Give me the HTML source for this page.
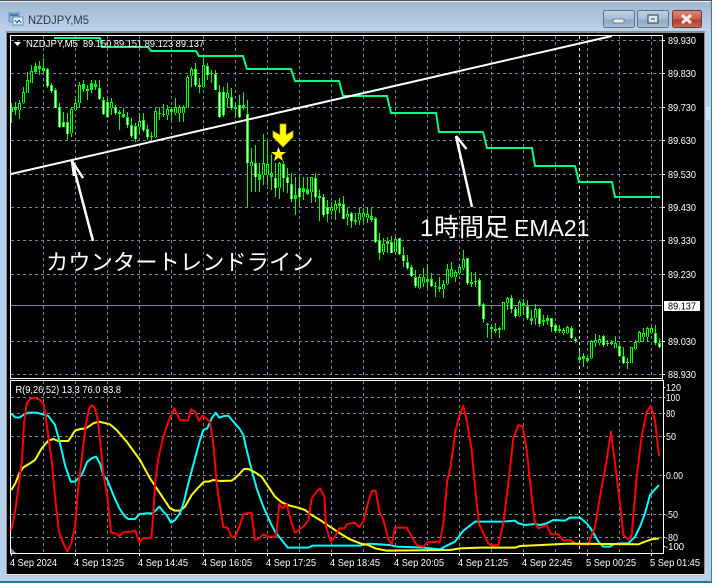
<!DOCTYPE html>
<html><head><meta charset="utf-8"><title>NZDJPY,M5</title>
<style>
html,body{margin:0;padding:0;background:#fff}
body{width:715px;height:584px;overflow:hidden;position:relative;font-family:"Liberation Sans","Noto Sans CJK JP",sans-serif}
svg{position:absolute;left:0;top:0}
.ax{font:10.5px "Liberation Sans",sans-serif;fill:#fff}
.big{font-family:"Liberation Sans","Noto Sans CJK JP",sans-serif;fill:#fff}
</style></head><body>
<svg width="715" height="584" viewBox="0 0 715 584">
<defs>
<linearGradient id="tb" x1="0" y1="0" x2="0" y2="1"><stop offset="0" stop-color="#9fb7d2"/><stop offset="1" stop-color="#bcd3ec"/></linearGradient>
<linearGradient id="bt" x1="0" y1="0" x2="0" y2="1"><stop offset="0" stop-color="#bfd0e2"/><stop offset=".5" stop-color="#a9bed6"/><stop offset=".55" stop-color="#8ea6c0"/><stop offset="1" stop-color="#a9c0d8"/></linearGradient>
<linearGradient id="cl" x1="0" y1="0" x2="0" y2="1"><stop offset="0" stop-color="#dc8a7c"/><stop offset=".5" stop-color="#c8604e"/><stop offset=".55" stop-color="#b23b2a"/><stop offset="1" stop-color="#c86a58"/></linearGradient>
</defs>
<!-- window frame -->
<path d="M0 3Q0 0 3 0H709Q712 0 712 3V582H0Z" fill="#b8d0ea"/>
<rect x="0" y="2" width="712" height="29" fill="url(#tb)"/>
<rect x="0" y="0" width="712" height="1" fill="#4d5660"/>
<rect x="0" y="1" width="712" height="1" fill="#eef3f8"/>
<rect x="0" y="581" width="712" height="2" fill="#17808c"/>
<rect x="711" y="1" width="1" height="581" fill="#3d7f90"/>
<rect x="6" y="31" width="699" height="545" fill="#8a8f96"/>
<rect x="7" y="33" width="697" height="541" fill="#000"/>
<rect x="6" y="574" width="699" height="1.500" fill="#e8eef5"/>
<rect x="706" y="107" width="4" height="13" fill="#d5e4f3"/>
<!-- title icon -->
<g shape-rendering="crispEdges">
<rect x="9" y="13" width="10" height="9" fill="#8fb4dc" stroke="#5f8bbb"/>
<rect x="13" y="17" width="10" height="8" fill="#e8f0fa" stroke="#5f8bbb"/>
<path d="M15 20l2 3 2-3 2 3" fill="none" stroke="#2f6bb0"/>
<rect x="10" y="14" width="8" height="2" fill="#3f78bb"/>
</g>
<text x="28" y="24" font-family="Liberation Sans" font-size="11.500" fill="#2f3a47" textLength="61" lengthAdjust="spacingAndGlyphs">NZDJPY,M5</text>
<!-- buttons -->
<rect x="603.500" y="10.500" width="31" height="17" rx="2" fill="url(#bt)" stroke="#5f7387"/>
<rect x="613" y="19" width="11" height="4" rx="1" fill="#e8edf2" stroke="#5d6a78" stroke-width=".8"/>
<rect x="637.500" y="10.500" width="31" height="17" rx="2" fill="url(#bt)" stroke="#5f7387"/>
<rect x="648" y="15" width="10" height="8" fill="#dfe7ef" stroke="#4d5b6a" stroke-width="1.300"/>
<rect x="651" y="18" width="4" height="2" fill="#7e93a8"/>
<rect x="672.500" y="10.500" width="29" height="17" rx="2" fill="url(#cl)" stroke="#6f3a35"/>
<path d="M682 15l9 8M691 15l-9 8" stroke="#f3ece8" stroke-width="3"/>
<!-- grid -->
<g stroke="#778899" stroke-width="1" stroke-dasharray="3 3" shape-rendering="crispEdges" fill="none">
<path d="M11 40.500H663M11 73.500H663M11 107.500H663M11 140.500H663M11 174.500H663M11 207.500H663M11 240.500H663M11 274.500H663M11 341.500H663M11 374.500H663"/>
<path d="M43.500 36V378M75.500 36V378M107.500 36V378M139.500 36V378M171.500 36V378M203.500 36V378M235.500 36V378M267.500 36V378M299.500 36V378M331.500 36V378M363.500 36V378M395.500 36V378M427.500 36V378M459.500 36V378M491.500 36V378M523.500 36V378M555.500 36V378M587.500 36V378M619.500 36V378M651.500 36V378"/>
<path d="M11 397.500H663M11 413.500H663M11 436.500H663M11 475.500H663M11 514.500H663M11 537.500H663"/>
<path d="M43.500 381V553M75.500 381V553M107.500 381V553M139.500 381V553M171.500 381V553M203.500 381V553M235.500 381V553M267.500 381V553M299.500 381V553M331.500 381V553M363.500 381V553M395.500 381V553M427.500 381V553M459.500 381V553M491.500 381V553M523.500 381V553M555.500 381V553M587.500 381V553M619.500 381V553M651.500 381V553"/>
</g>
<rect x="11" y="305" width="652" height="1" fill="#778899"/>
<path d="M579.500 36V553" stroke="#fff" stroke-dasharray="3 3" shape-rendering="crispEdges"/>
<!-- candles -->
<g fill="none" shape-rendering="crispEdges">
<path stroke="#00ff00" stroke-width="1" d="M11.5 103V123M15.5 102V115M19.5 100V119M23.5 87V104M27.5 72V93M31.5 65V83M35.5 63V73M39.5 61V75M43.5 58V73M47.5 68V88M51.5 83V93M55.5 88V108M59.5 103V128M63.5 112V127M67.5 113V140M71.5 107V137M75.5 98V110M79.5 82V107M83.5 80V92M87.5 85V100M91.5 80V93M95.5 80V90M99.5 80V100M103.5 97V115M107.5 97V118M111.5 98V115M115.5 105V115M119.5 110V130M123.5 108V118M127.5 112V128M131.5 118V138M135.5 123V142M139.5 113V132M143.5 113V132M147.5 125V140M151.5 132V140M155.5 108V138M159.5 107V120M163.5 104V117M167.5 105V120M171.5 107V122M175.5 98V115M179.5 105V122M183.5 105V122M187.5 75V108M191.5 67V87M195.5 63V87M199.5 78V93M203.5 57V88M207.5 63V80M211.5 70V83M215.5 70V90M219.5 85V118M223.5 87V117M227.5 83V108M231.5 88V110M235.5 103V118M239.5 95V118M243.5 92V110M247.5 100V207M251.5 148V192M255.5 145V192M259.5 163V192M263.5 134V185M267.5 140V185M271.5 154V190M275.5 163V197M279.5 162V199M283.5 161V192M287.5 168V193M291.5 173V202M295.5 177V215M299.5 177V205M303.5 177V200M307.5 177V195M311.5 177V203M315.5 173V202M319.5 190V221M323.5 194V217M327.5 200V222M331.5 202V215M335.5 200V220M339.5 198V213M343.5 196V219M347.5 208V225M351.5 212V228M355.5 213V225M359.5 208V225M363.5 208V222M367.5 208V223M371.5 207V222M375.5 217V243M379.5 233V260M383.5 238V255M387.5 237V253M391.5 236V253M395.5 237V253M399.5 238V255M403.5 247V267M407.5 255V270M411.5 265V277M415.5 270V288M419.5 275V289M423.5 268V287M427.5 264V288M431.5 273V287M435.5 282V297M439.5 277V292M443.5 280V298M447.5 264V285M451.5 262V278M455.5 270V282M459.5 265V275M463.5 250V270M467.5 258V285M471.5 272V287M475.5 272V287M479.5 278V307M483.5 303V323M487.5 323V338M491.5 325V338M495.5 323V333M499.5 327V338M503.5 302V330M507.5 297V310M511.5 295V313M515.5 307V318M519.5 300V317M523.5 299V315M527.5 300V320M531.5 310V325M535.5 304V325M539.5 308V327M543.5 315V326M547.5 315V325M551.5 318V332M555.5 323V333M559.5 325V333M563.5 328V335M567.5 326V334M571.5 326V339M575.5 337V343M579.5 351V363M583.5 353V367M587.5 357V363M591.5 340V359M595.5 334V347M599.5 335V345M603.5 335V347M607.5 340V346M611.5 340V345M615.5 336V348M619.5 343V357M623.5 347V364M627.5 358V369M631.5 347V363M635.5 340V350M639.5 331V343M643.5 328V342M647.5 327V342M651.5 327V334M655.5 325V345M659.5 338V348"/>
<path stroke="#00ff00" stroke-width="3" d="M11.5 108V112M15.5 107V110M19.5 103V110M23.5 92V103M27.5 80V93M31.5 71V83M35.5 66V72M39.5 66V69M43.5 68V71M47.5 69V86M51.5 85V91M55.5 90V108M59.5 107V127M63.5 122V127M67.5 122V134M71.5 109V133M75.5 103V110M79.5 85V103M83.5 84V89M87.5 89V91M91.5 83V90M95.5 84V87M99.5 88V99M103.5 100V114M107.5 102V117M111.5 102V108M115.5 107V113M119.5 112V114M123.5 114V117M127.5 117V125M131.5 125V136M135.5 126V139M139.5 121V127M143.5 120V130M147.5 129V137M151.5 136V137M155.5 111V137M159.5 113V114M163.5 114V115M167.5 109V115M171.5 109V112M175.5 107V113M179.5 107V113M183.5 107V113M187.5 77V108M191.5 69V76M195.5 69V85M199.5 85V87M203.5 65V87M207.5 66V75M211.5 73V74M215.5 74V90M219.5 92V117M223.5 92V115M227.5 93V98M231.5 97V108M235.5 107V109M239.5 105V117M243.5 105V108M247.5 114V163M251.5 162V166M255.5 163V177M259.5 174V180M263.5 163V175M267.5 164V175M271.5 173V177M275.5 178V188M279.5 163V188M283.5 164V178M287.5 177V183M291.5 184V199M295.5 195V199M299.5 188V197M303.5 188V192M307.5 189V194M311.5 177V192M315.5 178V197M319.5 196V198M323.5 197V215M327.5 207V214M331.5 207V211M335.5 204V210M339.5 203V206M343.5 204V219M347.5 214V217M351.5 213V221M355.5 220V222M359.5 213V220M363.5 213V217M367.5 214V218M371.5 216V220M375.5 218V242M379.5 240V253M383.5 244V252M387.5 241V244M391.5 242V253M395.5 239V252M399.5 238V254M403.5 255V261M407.5 262V268M411.5 267V276M415.5 277V286M419.5 277V288M423.5 277V283M427.5 279V282M431.5 279V286M435.5 286V287M439.5 287V289M443.5 284V289M447.5 269V284M451.5 269V277M455.5 272V277M459.5 267V273M463.5 259V268M467.5 258V283M471.5 282V284M475.5 281V282M479.5 280V305M483.5 304V319M487.5 324V325M491.5 327V329M495.5 329V331M499.5 328V330M503.5 302V330M507.5 298V303M511.5 298V309M515.5 309V316M519.5 302V316M523.5 303V305M527.5 306V318M531.5 318V321M535.5 309V318M539.5 309V324M543.5 320V322M547.5 318V321M551.5 318V327M555.5 325V331M559.5 329V331M563.5 330V333M567.5 327V333M571.5 328V338M575.5 339V341M579.5 357V360M583.5 356V359M587.5 358V361M591.5 341V358M595.5 340V343M599.5 339V343M603.5 336V345M607.5 343V344M611.5 342V344M615.5 343V348M619.5 346V356M623.5 356V363M627.5 362V363M631.5 347V363M635.5 342V349M639.5 332V342M643.5 333V337M647.5 328V337M651.5 328V333M655.5 333V343M659.5 343V347"/>
<path stroke="#fff" stroke-width="1" d="M47.5 70V86M51.5 86V91M55.5 91V108M59.5 108V127M63.5 123V127M67.5 123V134M99.5 89V99M103.5 101V114M107.5 103V117M115.5 108V113M127.5 118V125M131.5 126V136M135.5 127V139M143.5 121V130M147.5 130V137M195.5 70V85M207.5 67V75M215.5 75V90M219.5 93V117M223.5 93V115M231.5 98V108M239.5 106V117M247.5 115V163M255.5 164V177M275.5 179V188M283.5 165V178M287.5 178V183M291.5 185V199M299.5 189V197M315.5 179V197M323.5 198V215M327.5 208V214M343.5 205V219M351.5 214V221M375.5 219V242M379.5 241V253M391.5 243V253M399.5 239V254M403.5 256V261M407.5 263V268M411.5 268V276M415.5 278V286M431.5 280V286M467.5 259V283M479.5 281V305M483.5 305V319M511.5 299V309M515.5 310V316M527.5 307V318M539.5 310V324M551.5 319V327M555.5 326V331M571.5 329V338M575.5 340V341M603.5 337V345M619.5 347V356M623.5 357V363M655.5 334V343M659.5 344V347"/>
<path stroke="#000" stroke-width="1" d="M19.5 104V110M23.5 93V103M27.5 81V93M31.5 72V83M71.5 110V133M75.5 104V110M79.5 86V103M111.5 103V108M139.5 122V127M155.5 112V137M167.5 110V115M175.5 108V113M179.5 108V113M183.5 108V113M187.5 78V108M191.5 70V76M203.5 66V87M227.5 94V98M251.5 163V166M263.5 164V175M267.5 165V175M279.5 164V188M311.5 178V192M331.5 208V211M335.5 205V210M347.5 215V217M359.5 214V220M363.5 214V217M367.5 215V218M383.5 245V252M395.5 240V252M419.5 278V288M423.5 278V283M443.5 285V289M447.5 270V284M451.5 270V277M455.5 273V277M459.5 268V273M463.5 260V268M503.5 303V330M507.5 299V303M519.5 303V316M535.5 310V318M563.5 331V333M567.5 328V333M591.5 342V358M595.5 341V343M599.5 340V343M615.5 344V348M631.5 348V363M635.5 343V349M639.5 333V342M643.5 334V337M647.5 329V337M651.5 329V333"/>
</g>
<!-- EMA -->
<path fill="none" stroke="#00ff80" stroke-width="2" d="M54 38H100L102 47H148L151 51H196L199 56H243L247 69H291L295 81H339L343 96H387L391 113H436L439 132H483L487 148H532L535 166H575L579 182H612L615 197H660"/>
<!-- trendline & arrows -->
<path d="M11 174L612 36" stroke="#fff" stroke-width="2" fill="none"/>
<path d="M93 241L72 161M72 161L83 178M72 161L74 176" stroke="#fff" stroke-width="2.500" fill="none"/>
<path d="M472 207L456 136M456 136L466.500 149M456 136L459 150" stroke="#fff" stroke-width="2.500" fill="none"/>
<!-- yellow marks -->
<path d="M280 124H286V135L293 131V137L283 147L273 137V131L280 135Z" fill="#ffff00" stroke="#c9a800" stroke-width=".7"/>
<path d="M278.500 147L280.500 152H286L281.500 155.500L283 161L278.500 157.800L274 161L275.500 155.500L271 152H276.500Z" fill="#ffff00"/>
<!-- borders -->
<g shape-rendering="crispEdges">
<rect x="10" y="35" width="653" height="1" fill="#fff"/>
<rect x="10" y="35" width="1" height="344" fill="#fff"/>
<rect x="662" y="35" width="1" height="345" fill="#fff"/>
<rect x="10" y="378" width="653" height="1" fill="#fff"/>
<rect x="10" y="380" width="653" height="1" fill="#fff"/>
<rect x="10" y="380" width="1" height="174" fill="#fff"/>
<rect x="663" y="380" width="1" height="174" fill="#fff"/>
<rect x="10" y="553" width="654" height="1" fill="#fff"/>
<path stroke="#fff" d="M11.500 554V556M75.500 554V556M139.500 554V556M203.500 554V556M267.500 554V556M331.500 554V556M395.500 554V556M459.500 554V556M523.500 554V556M587.500 554V556M651.500 554V556"/>
<path stroke="#fff" d="M663 387.500h2M663 397.500h2M663 413.500h2M663 436.500h2M663 475.500h2M663 514.500h2M663 537.500h2M663 546.500h2M663 40.500h2M663 73.500h2M663 107.500h2M663 140.500h2M663 174.500h2M663 207.500h2M663 240.500h2M663 274.500h2M663 341.500h2M663 374.500h2"/>
</g>
<path d="M11 548L16 553H11Z" fill="#8090a0"/>
<!-- indicator lines -->
<g fill="none" stroke-width="6" stroke-linejoin="round">
<g transform="translate(0,380) scale(.33333)">
<polyline stroke="#ffff00" points="34,330 46,310 58,280 70,262 90,250 105,240 125,205 145,182 160,177 175,183 205,183 225,152 240,147 258,145 280,130 295,125 310,128 330,133 350,150 380,185 420,240 450,295 470,325 490,355 510,385 525,392 540,392 555,380 575,345 590,328 612,305 625,305 640,300 660,303 695,302 710,290 720,280"/>
<polyline stroke="#00ffff" points="34,102 46,112 58,113 70,105 85,98 110,98 125,102 145,108 165,135 180,190 195,255 212,305 225,305 245,285 262,245 275,235 288,230 300,250 310,285 322,300 340,345 358,385 375,410 385,417 405,417 418,402 442,400 458,400 478,380 490,395 500,405 513,428 525,420 540,400 552,365 565,310 585,235 600,180 610,150 622,145 635,115 647,98 658,113 672,108 685,107 700,125 720,148"/>
<polyline stroke="#ff0000" points="34,450 46,390 58,300 66,240 72,130 80,70 92,55 105,53 120,60 130,70 137,110 145,170 155,240 165,350 177,455 190,490 202,515 214,490 225,440 235,320 247,220 258,130 268,85 275,75 285,85 293,120 300,180 310,280 322,350 333,458 346,460 358,468 370,457 395,455 406,452 418,487 430,475 454,473 460,400 466,300 475,235 490,170 505,125 523,85 540,120 564,122 573,88 585,95 597,122 608,107 630,125 640,190 650,310 660,380 670,442 682,442 694,470 706,470 720,435"/>
</g>
<g transform="translate(240,380) scale(.33333)">
<polyline stroke="#00ffff" points="0,148 10,165 20,210 35,270 50,325 70,380 90,425 105,455 125,480 143,503 205,503 218,497 360,497 385,491 450,495 470,500 550,503 600,508 620,497 645,485 670,452 705,425 720,425"/>
<polyline stroke="#ffff00" points="0,280 12,267 25,267 45,277 65,290 85,320 105,350 125,367 150,377 175,383 195,390 215,405 240,420 270,440 300,460 330,478 360,490 385,495 405,505 440,512 630,510 660,505 720,503"/>
<polyline stroke="#ff0000" points="0,435 10,403 34,398 45,480 58,475 70,463 85,470 108,470 118,372 128,385 140,373 155,430 165,458 180,447 195,435 205,420 215,355 230,335 240,325 253,350 258,440 272,485 285,470 298,445 313,445 322,432 345,428 358,442 370,425 385,365 395,333 407,332 418,395 430,420 445,478 455,493 465,443 500,443 515,470 530,495 550,500 563,487 600,485 610,430 622,300 632,260 645,160 657,110 670,78 680,120 695,210 708,350 718,440"/>
</g>
<g transform="translate(475,380) scale(.33333)">
<polyline stroke="#00ffff" points="13,425 85,425 120,422 130,430 150,435 180,432 195,435 215,430 235,420 270,422 285,413 315,413 335,430 350,450 370,485 385,500 405,500 415,493 435,490 460,490 480,470 495,440 510,400 525,345 540,328 552,315"/>
<polyline stroke="#ff0000" points="12,430 25,460 40,490 50,497 70,495 85,430 100,310 115,175 130,135 143,140 155,210 170,350 180,430 190,445 215,435 228,463 250,463 265,482 285,480 305,493 340,493 360,440 375,350 395,240 408,155 420,250 435,370 445,465 460,478 470,465 485,290 500,170 515,95 528,78 540,120 552,228"/>
<polyline stroke="#ffff00" points="13,503 120,503 135,498 200,495 280,491 490,493 510,485 530,478 552,475"/>
</g>
</g>
<!-- chart text -->
<path d="M14 42H21L17.500 46Z" fill="#fff"/>
<text class="ax" x="26" y="47" textLength="52" lengthAdjust="spacingAndGlyphs">NZDJPY,M5</text>
<text class="ax" x="83" y="47" textLength="121" lengthAdjust="spacingAndGlyphs">89.150 89.151 89.123 89.137</text>
<text class="ax" x="15.500" y="393" textLength="105.500" lengthAdjust="spacingAndGlyphs">R(9,26,52) 13.3 76.0 83.8</text>
<text class="big" x="46" y="270" font-size="22.300">カウンタートレンドライン</text>
<text class="big" y="236"><tspan x="420" font-size="24">1</tspan><tspan x="434" font-size="25">時間足</tspan><tspan x="514" font-size="23">EMA21</tspan></text>
<!-- axis labels -->
<g>
<text class="ax" x="668" y="44" textLength="28" lengthAdjust="spacingAndGlyphs">89.930</text>
<text class="ax" x="668" y="77" textLength="28" lengthAdjust="spacingAndGlyphs">89.830</text>
<text class="ax" x="668" y="111" textLength="28" lengthAdjust="spacingAndGlyphs">89.730</text>
<text class="ax" x="668" y="144" textLength="28" lengthAdjust="spacingAndGlyphs">89.630</text>
<text class="ax" x="668" y="178" textLength="28" lengthAdjust="spacingAndGlyphs">89.530</text>
<text class="ax" x="668" y="211" textLength="28" lengthAdjust="spacingAndGlyphs">89.430</text>
<text class="ax" x="668" y="244" textLength="28" lengthAdjust="spacingAndGlyphs">89.330</text>
<text class="ax" x="668" y="278" textLength="28" lengthAdjust="spacingAndGlyphs">89.230</text>
<text class="ax" x="668" y="345" textLength="28" lengthAdjust="spacingAndGlyphs">89.030</text>
<text class="ax" x="668" y="378" textLength="28" lengthAdjust="spacingAndGlyphs">88.930</text>
<rect x="664" y="301" width="36" height="10" fill="#fff"/>
<text x="668" y="309.500" font-family="Liberation Sans" font-size="10.500" fill="#000" textLength="28" lengthAdjust="spacingAndGlyphs">89.137</text>
<text class="ax" x="666" y="391" textLength="15" lengthAdjust="spacingAndGlyphs">120</text>
<text class="ax" x="666" y="401" textLength="14" lengthAdjust="spacingAndGlyphs">100</text>
<text class="ax" x="666" y="417" textLength="9" lengthAdjust="spacingAndGlyphs">80</text>
<text class="ax" x="666" y="440" textLength="10" lengthAdjust="spacingAndGlyphs">50</text>
<text class="ax" x="666" y="479" textLength="17" lengthAdjust="spacingAndGlyphs">0.00</text>
<text class="ax" x="665" y="518" textLength="13" lengthAdjust="spacingAndGlyphs">-50</text>
<text class="ax" x="665" y="541" textLength="13" lengthAdjust="spacingAndGlyphs">-80</text>
<text class="ax" x="665" y="550" textLength="19" lengthAdjust="spacingAndGlyphs">-100</text>
<text class="ax" x="10" y="566" textLength="47" lengthAdjust="spacingAndGlyphs">4 Sep 2024</text>
<text class="ax" x="74" y="566" textLength="50" lengthAdjust="spacingAndGlyphs">4 Sep 13:25</text>
<text class="ax" x="138" y="566" textLength="50" lengthAdjust="spacingAndGlyphs">4 Sep 14:45</text>
<text class="ax" x="202" y="566" textLength="50" lengthAdjust="spacingAndGlyphs">4 Sep 16:05</text>
<text class="ax" x="266" y="566" textLength="50" lengthAdjust="spacingAndGlyphs">4 Sep 17:25</text>
<text class="ax" x="330" y="566" textLength="50" lengthAdjust="spacingAndGlyphs">4 Sep 18:45</text>
<text class="ax" x="394" y="566" textLength="50" lengthAdjust="spacingAndGlyphs">4 Sep 20:05</text>
<text class="ax" x="458" y="566" textLength="50" lengthAdjust="spacingAndGlyphs">4 Sep 21:25</text>
<text class="ax" x="522" y="566" textLength="50" lengthAdjust="spacingAndGlyphs">4 Sep 22:45</text>
<text class="ax" x="586" y="566" textLength="50" lengthAdjust="spacingAndGlyphs">5 Sep 00:25</text>
<text class="ax" x="650" y="566" textLength="50" lengthAdjust="spacingAndGlyphs">5 Sep 01:45</text>
</g>
</svg>
</body></html>
